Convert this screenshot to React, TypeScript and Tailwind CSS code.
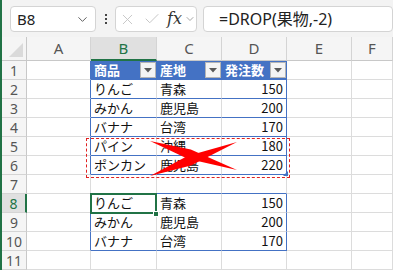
import { ChevronDown, X, Check } from 'lucide-react'

const FONT = { fontFamily: '"Noto Sans CJK JP", "Noto Sans", sans-serif' }

type Row = [string, string, string]

const ROWS: Record<number, Row> = {
  1: ['商品', '産地', '発注数'],
  2: ['りんご', '青森', '150'],
  3: ['みかん', '鹿児島', '200'],
  4: ['バナナ', '台湾', '170'],
  5: ['パイン', '沖縄', '180'],
  6: ['ポンカン', '鹿児島', '220'],
  8: ['りんご', '青森', '150'],
  9: ['みかん', '鹿児島', '200'],
  10: ['バナナ', '台湾', '170'],
}

const inT1 = (r: number) => r >= 1 && r <= 6
const inT2 = (r: number) => r >= 8 && r <= 10

function FilterButton() {
  return (
    <div className="mt-[1px] w-[16px] h-[16px] shrink-0 bg-[#f4f4f4] border border-[#b5b5b5] flex items-center justify-center">
      <svg width="8" height="5" viewBox="0 0 8 5">
        <polygon points="0,0 8,0 4,4.5" fill="#595959" />
      </svg>
    </div>
  )
}

function Toolbar() {
  return (
    <div className="h-[37px] bg-[#f3f3f3] flex items-start pt-[6px]">
      {/* name box */}
      <div className="ml-[8px] w-[100px] h-[26px] bg-white border border-[#d4d4d4] rounded-[4px] flex items-center justify-between pl-[6px] pr-[5px]">
        <span className="text-[15px] text-[#222]" style={{ fontFamily: '"Noto Sans", sans-serif' }}>
          B8
        </span>
        <ChevronDown className="w-[15px] h-[15px] text-[#555]" strokeWidth={1.5} />
      </div>
      {/* dots */}
      <div className="w-[22px] h-[26px] flex flex-col items-center justify-center gap-[2px]">
        <span className="w-[2px] h-[2px] bg-[#444]" />
        <span className="w-[2px] h-[2px] bg-[#444]" />
        <span className="w-[2px] h-[2px] bg-[#444]" />
      </div>
      {/* cancel / enter / fx */}
      <div className="w-[84px] h-[26px] bg-white border border-[#d4d4d4] rounded-[4px] flex items-center">
        <X className="ml-[3px] w-[17px] h-[17px] text-[#c4c4c4]" strokeWidth={1.3} />
        <Check className="ml-[7px] w-[18px] h-[18px] text-[#c4c4c4]" strokeWidth={1.3} />
        <span
          className="ml-[6px] text-[16px] italic text-[#333] leading-none"
          style={{ fontFamily: '"DejaVu Serif", "Liberation Serif", serif' }}
        >
          fx
        </span>
        <ChevronDown className="ml-[2px] w-[12px] h-[12px] text-[#888]" strokeWidth={1.5} />
      </div>
      {/* formula */}
      <div className="ml-[6px] w-[190px] h-[26px] bg-white border border-[#d4d4d4] rounded-[4px] flex items-center pl-[15px] shrink-0">
        <span className="text-[16px] text-[#222]" style={{ fontFamily: '"Noto Sans", "Noto Sans CJK JP", sans-serif' }}>
          =DROP(果物,-2)
        </span>
      </div>
    </div>
  )
}

function ColHeader({ label, selected }: { label: string; selected?: boolean }) {
  return (
    <div
      className={
        selected
          ? 'bg-[#e0e0e0] border-r border-[#d4d4d4] border-b-2 border-b-[#217346] flex items-center justify-center text-[15px] text-[#217346]'
          : 'bg-[#f5f5f5] border-r border-[#d4d4d4] border-b border-b-[#c8c8c8] flex items-center justify-center text-[15px] text-[#555]'
      }
      style={{ fontFamily: '"Noto Sans", sans-serif' }}
    >
      {label}
    </div>
  )
}

function RowHeader({ n }: { n: number }) {
  const sel = n === 8
  return (
    <div
      className={
        sel
          ? 'bg-[#e0e0e0] border-b border-[#d4d4d4] border-r-2 border-r-[#217346] flex items-center justify-center text-[14px] text-[#217346]'
          : 'bg-[#f5f5f5] border-b border-[#d4d4d4] border-r border-r-[#c8c8c8] flex items-center justify-center text-[14px] text-[#555]'
      }
      style={{ fontFamily: '"Noto Sans", sans-serif' }}
    >
      {n}
    </div>
  )
}

function Cell({ r, c }: { r: number; c: number }) {
  // c: 0=A 1=B 2=C 3=D 4=E 5=F
  const data = ROWS[r]
  const inTable = (inT1(r) || inT2(r)) && c >= 1 && c <= 3
  const header = r === 1 && inTable
  const text = inTable && data ? data[c - 1] : ''

  const blueRight = (c === 0 || c === 3) && (inT1(r) || inT2(r))
  const blueBottom = c >= 1 && c <= 3 && (inT1(r) || r === 7 || r === 10)

  let cls = 'flex items-center border-r border-b text-[13px] text-[#111] overflow-hidden whitespace-nowrap '
  cls += blueRight || header ? 'border-r-[#4472c4] ' : 'border-r-[#dcdcdc] '
  cls += blueBottom ? 'border-b-[#4472c4] ' : 'border-b-[#dcdcdc] '
  if (header) cls += 'bg-[#4472c4] text-white font-bold items-start justify-between pl-[3px] '
  else if (c === 3) cls += 'justify-end pr-[3px] '
  else cls += 'pl-[3px] '

  return (
    <div className={cls} style={FONT}>
      {header ? (
        <>
          <span className="leading-[18px]">{text}</span>
          <FilterButton />
        </>
      ) : (
        <span>{text}</span>
      )}
    </div>
  )
}

export default function App() {
  const rows = Array.from({ length: 11 }, (_, i) => i + 1)
  const cols = ['A', 'B', 'C', 'D', 'E', 'F']
  return (
    <div className="w-[393px] h-[270px] overflow-hidden bg-white border-l-2 border-[#217346]">
      <Toolbar />
      <div className="relative grid grid-cols-[25px_64px_66px_65px_65px_65px_41px] grid-rows-[24px_repeat(11,19px)]">
        {/* corner */}
        <div className="bg-[#f5f5f5] border-r border-b border-[#c8c8c8] flex items-end justify-end p-[3px]">
          <svg width="14" height="14" viewBox="0 0 14 14">
            <polygon points="14,0 14,14 0,14" fill="#dadada" />
          </svg>
        </div>
        {cols.map((c) => (
          <ColHeader key={c} label={c} selected={c === 'B'} />
        ))}
        {rows.map((r) => (
          <div key={r} className="contents">
            <RowHeader n={r} />
            {cols.map((_, c) => (
              <Cell key={c} r={r} c={c} />
            ))}
          </div>
        ))}

        {/* copy marquee around B5:D6 */}
        <div className="absolute left-[84px] top-[101px] w-[204px] h-[40px] border border-dashed border-[#e02020]" />

        {/* red cross */}
        <svg className="absolute left-[144px] top-[98px]" width="96" height="44" viewBox="0 0 96 44">
          <polygon points="4,6 44.8,14.4 91,35 41.6,23.8" fill="#ff0000" />
          <polygon points="4,41 45,30.4 91,7 41.4,21" fill="#ff0000" />
        </svg>

        {/* table resize handle */}
        <svg className="absolute left-[281px] top-[134px]" width="5" height="5" viewBox="0 0 5 5">
          <polygon points="5,0 5,5 0,5" fill="#4472c4" />
        </svg>

        {/* active cell B8 */}
        <div className="absolute left-[88px] top-[156px] w-[67px] h-[21px] border-2 border-[#217346]" />
        <div className="absolute left-[151px] top-[174px] w-[6px] h-[6px] bg-[#217346] border border-white" />
      </div>
    </div>
  )
}
